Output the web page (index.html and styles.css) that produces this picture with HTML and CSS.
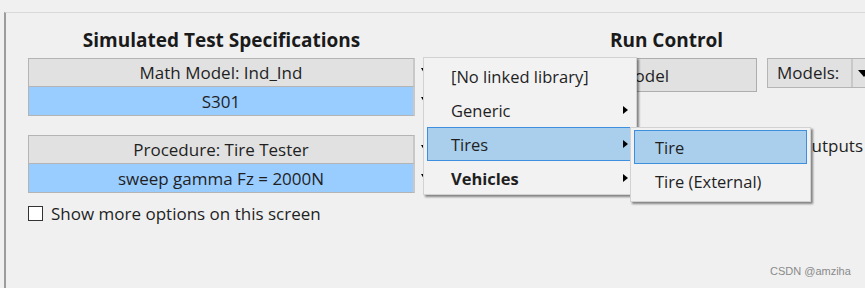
FILE: index.html
```html
<!DOCTYPE html>
<html>
<head>
<meta charset="utf-8">
<link rel="stylesheet" href="styles.css">
</head>
<body>
<div class="frame">
  <div class="cols">
    <section class="spec">
      <h2 class="title">Simulated Test Specifications</h2>
      <div class="group">
        <div class="row"><div class="cell head">Math Model: Ind_Ind</div><div class="drop"><span class="tri-down"></span></div></div>
        <div class="row"><div class="cell sel">S301</div><div class="drop"><span class="tri-down"></span></div></div>
      </div>
      <div class="group">
        <div class="row"><div class="cell head">Procedure: Tire Tester</div><div class="drop"><span class="tri-down"></span></div></div>
        <div class="row"><div class="cell sel">sweep gamma Fz = 2000N</div><div class="drop"><span class="tri-down"></span></div></div>
      </div>
      <label class="check"><span class="box"></span><span>Show more options on this screen</span></label>
    </section>
    <section class="run">
      <h2 class="title">Run Control</h2>
      <div class="run-row">
        <div class="btn">Run Math Model</div>
        <div class="models"><span class="models-label">Models:</span><span class="models-drop"><span class="tri-down big"></span></span></div>
      </div>
      <div class="outputs">Write all outputs</div>
    </section>
  </div>
</div>

<div class="menu">
  <div class="item">[No linked library]</div>
  <div class="item">Generic<span class="tri-right"></span></div>
  <div class="item hot">Tires<span class="tri-right"></span></div>
  <div class="item bold">Vehicles<span class="tri-right"></span></div>
</div>
<div class="submenu">
  <div class="item hot">Tire</div>
  <div class="item">Tire (External)</div>
</div>
<div class="wm">CSDN @amziha</div>
</body>
</html>
```
FILE: styles.css
```css
html, body {
  margin: 0;
  padding: 0;
  width: 865px;
  height: 288px;
  overflow: hidden;
  background: #f0f0f0;
  font-family: "Open Sans", "Noto Sans", sans-serif;
  color: #1f1f1f;
}
.frame {
  margin: 12px 0 0 4px;
  height: 276px;
  border-left: 2px solid #9c9c9c;
  border-top: 1px solid #d9d9d9;
  box-sizing: border-box;
}
.cols {
  display: flex;
  padding-left: 22px;
  padding-top: 13px;
}
.spec {
  width: 404px;
  flex: none;
}
.title {
  margin: 0;
  height: 32px;
  font-size: 19px;
  font-weight: 700;
  line-height: 28px;
  text-align: center;
  color: #1a1a1a;
}
.spec .title { width: 387px; }
.group {
  margin-bottom: 19px;
}
.row {
  display: flex;
  height: 29px;
}
.cell {
  width: 387px;
  box-sizing: border-box;
  border: 1px solid #b4b4b4;
  display: flex;
  align-items: center;
  justify-content: center;
  font-size: 17px;
}
.cell.head {
  background: #e1e1e1;
  border-right: 2px solid #c8c8c8;
}
.cell.sel {
  background: #99ccff;
  border-top: none;
  border-right: 2px solid #c8c8c8;
}
.drop {
  width: 17px;
  display: flex;
  justify-content: center;
  padding-top: 10px;
  box-sizing: border-box;
}
.tri-down {
  width: 0;
  height: 0;
  border-left: 3px solid transparent;
  border-right: 3px solid transparent;
  border-top: 5px solid #000;
}
.tri-down.big {
  border-left-width: 6px;
  border-right-width: 6px;
  border-top-width: 7px;
}
.check {
  display: flex;
  align-items: center;
  gap: 8px;
  margin-top: -10px;
  font-size: 17px;
}
.box {
  width: 13px;
  height: 13px;
  border: 1px solid #333;
  background: #fff;
}
.run {
  margin-left: 38px;
  width: 393px;
  flex: none;
}
.run-row {
  display: flex;
  gap: 10px;
}
.btn {
  flex: none;
  width: 287px;
  height: 34px;
  padding-right: 20px;
  box-sizing: border-box;
  border: 1px solid #adadad;
  background: #e1e1e1;
  display: flex;
  align-items: center;
  justify-content: center;
  font-size: 17px;
}
.models {
  flex: none;
  width: 120px;
  height: 30px;
  box-sizing: border-box;
  border: 1px solid #b4b4b4;
  background: #e1e1e1;
  display: flex;
  align-items: center;
  font-size: 17px;
}
.models-label {
  width: 85px;
  padding-left: 9px;
  box-sizing: border-box;
  border-right: 2px solid #c8c8c8;
  height: 28px;
  line-height: 28px;
}
.models-drop {
  padding-left: 5px;
  display: flex;
}
.outputs {
  margin-top: 42px;
  text-align: right;
  font-size: 17px;
  white-space: nowrap;
}
.menu, .submenu {
  position: absolute;
  background: #f2f2f2;
  border: 1px solid #d2d2d2;
  box-shadow: 2px 2px 2px rgba(0,0,0,0.45);
  padding: 1px 3px;
  box-sizing: border-box;
  font-size: 16.5px;
}
.menu {
  left: 423px;
  top: 57px;
  width: 214px;
  height: 138px;
}
.submenu {
  left: 630px;
  top: 127px;
  width: 181px;
  height: 75px;
  padding-top: 2px;
}
.item {
  position: relative;
  height: 34px;
  box-sizing: border-box;
  display: flex;
  align-items: center;
  padding-left: 23px;
  border: 1px solid transparent;
}
.submenu .item { padding-left: 20px; }
.item.hot {
  background: #aacfec;
  border-color: #3f8fdf;
}
.item.bold { font-weight: 700; }
.tri-right {
  position: absolute;
  right: 4px;
  top: 12px;
  width: 0;
  height: 0;
  border-top: 4px solid transparent;
  border-bottom: 4px solid transparent;
  border-left: 5px solid #000;
}
.wm {
  position: absolute;
  left: 770px;
  top: 265px;
  font-family: "Liberation Sans", Arial, sans-serif;
  font-size: 11px;
  color: #8a8a8a;
}
```
